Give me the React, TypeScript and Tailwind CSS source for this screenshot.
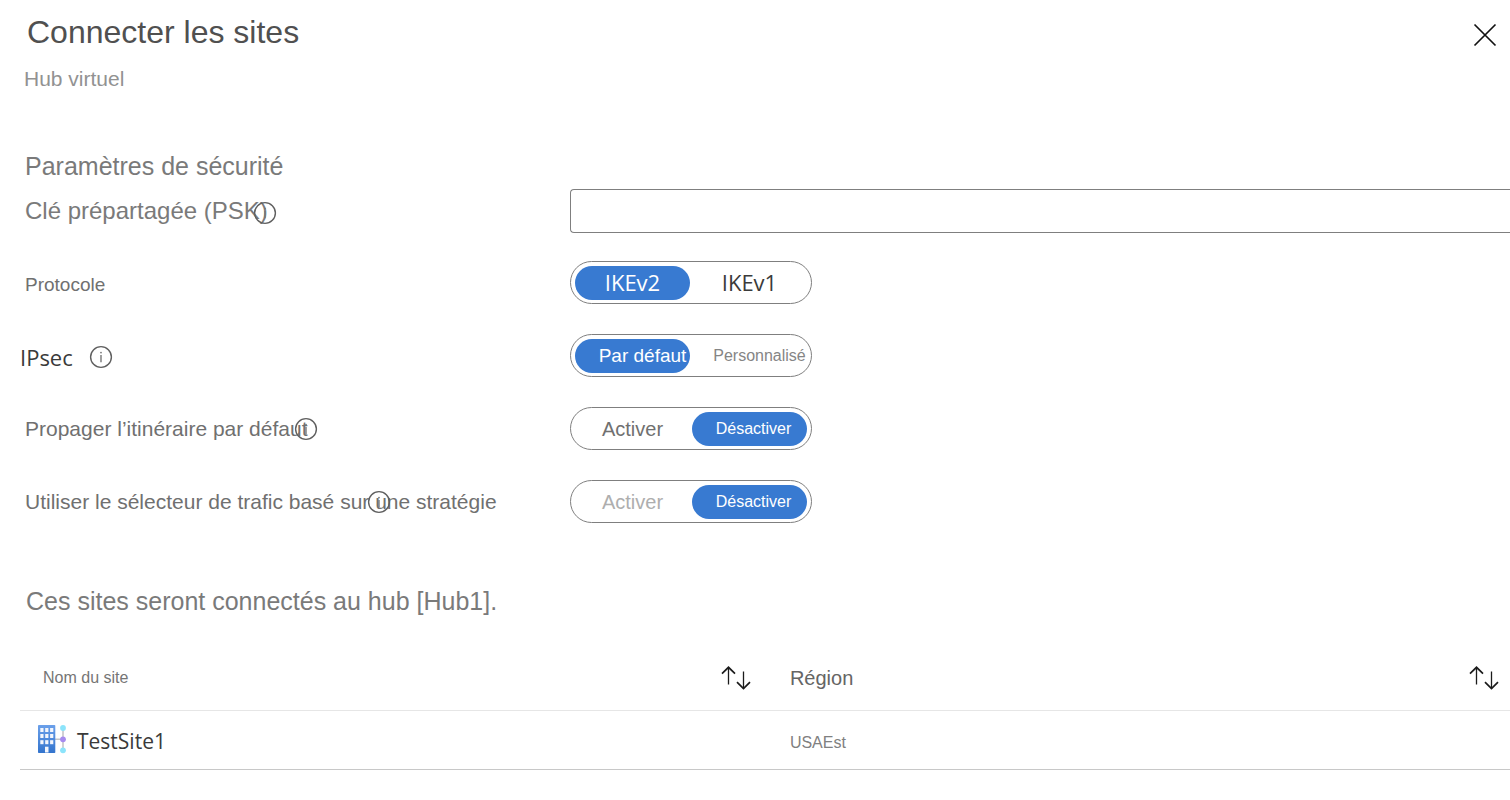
import { useState } from "react";
import type { ReactNode } from "react";

const UI_FONT = "font-['Open_Sans','Noto_Sans',sans-serif]";

function InfoIcon() {
  return (
    <svg className="size-6 shrink-0" viewBox="0 0 24 24" fill="none" aria-hidden="true">
      <circle cx="12" cy="12" r="10.4" stroke="#606060" strokeWidth="1.4" />
      <path d="M12 10v7.2" stroke="#777" strokeWidth="1.4" />
      <circle cx="12" cy="7.6" r="0.9" fill="#777" />
    </svg>
  );
}

function SortIcon() {
  return (
    <svg className="h-6 w-8 shrink-0" viewBox="0 0 32 24" fill="none" stroke="#1b1b1b" aria-hidden="true">
      <path d="M8.500 1.5V18.5M23.500 5.500V22.500" strokeWidth="1.3" />
      <path d="M2 7.700L8.500 1.300L15 7.700M17 16.200L23.500 22.600L30 16.200" strokeWidth="1.7" />
    </svg>
  );
}

function SiteIcon() {
  const rows = [5, 11, 17.2];
  const cols = [2.3, 7.2, 12.1];
  return (
    <svg className="h-8 w-[30px] shrink-0" viewBox="0 0 30 32" fill="none" aria-hidden="true">
      <defs>
        <linearGradient id="building" x1="0" y1="2" x2="0" y2="30" gradientUnits="userSpaceOnUse">
          <stop stopColor="#6ba0ea" />
          <stop offset="1" stopColor="#3374cd" />
        </linearGradient>
      </defs>
      <path d="M17 16.300H25M25 5V27.300" stroke="#c6c6ca" strokeWidth="1.600" />
      <rect x="0" y="2" width="17.300" height="28" rx="0.8" fill="url(#building)" />
      {rows.map((y) =>
        cols.map((x) => <rect key={`${x}-${y}`} x={x} y={y} width="3.200" height="4" fill="#f3f6fc" />),
      )}
      <rect x="7" y="23.700" width="3.500" height="5.800" fill="#f3f6fc" />
      <circle cx="25" cy="5" r="2.900" fill="#8ce4fb" />
      <circle cx="25" cy="16.300" r="2.900" fill="#a78bef" />
      <circle cx="25" cy="27.300" r="2.900" fill="#8ce4fb" />
    </svg>
  );
}

type Option = { text: string; className: string; idleColor: string };

function Toggle({ label, options, initial }: { label: string; options: [Option, Option]; initial: number }) {
  const [selected, setSelected] = useState(initial);
  return (
    <div
      role="group"
      aria-label={label}
      className="grid h-[43px] w-[242px] grid-cols-2 gap-[2px] rounded-full border border-[#7f7f7f] p-1"
    >
      {options.map((option, i) => (
        <button
          key={option.text}
          type="button"
          aria-pressed={selected === i}
          onClick={() => setSelected(i)}
          className={`flex h-[34px] items-center justify-center rounded-full whitespace-nowrap ${option.className} ${
            selected === i ? "bg-[#387ad1] text-white" : option.idleColor
          }`}
        >
          {option.text}
        </button>
      ))}
    </div>
  );
}

function Row({ label, children }: { label: ReactNode; children: ReactNode }) {
  return (
    <div className="grid grid-cols-[545px_1fr] items-center">
      <div className="flex items-center text-[#707070]">{label}</div>
      {children}
    </div>
  );
}

export default function App() {
  return (
    <main className="overflow-x-hidden bg-white pb-7 font-['Liberation_Sans',Arial,sans-serif]">
      <header className="flex items-start justify-between pt-3 pr-3 pl-6">
        <div>
          <h1 className="pl-[3px] text-[32px] leading-10 text-[#505050]">Connecter les sites</h1>
          <p className="mt-3 text-[21px] leading-[30px] text-[#929292]">Hub virtuel</p>
        </div>
        <button type="button" aria-label="Fermer" className="mt-[10px] text-[#111]">
          <svg className="size-[26px]" viewBox="0 0 26 26" fill="none" stroke="currentColor" strokeWidth="1.7" aria-hidden="true">
            <path d="M2.500 2.500L23.500 23.500M23.500 2.500L2.500 23.500" />
          </svg>
        </button>
      </header>

      <section className="pt-14 pl-[25px]">
        <h2 className="text-[25px] leading-8 text-[#7a7a7a]">Paramètres de sécurité</h2>
        <div className="mt-[7px]">
          <Row
            label={
              <div className="relative">
                <label htmlFor="psk" className="text-[24px] leading-8 text-[#7a7a7a]">
                  Clé prépartagée (PSK)
                </label>
                <span className="absolute top-[6px] -right-[9px]">
                  <InfoIcon />
                </span>
              </div>
            }
          >
            <input id="psk" type="text" className="h-11 w-full rounded-l border border-r-0 border-[#7f7f7f] px-3 text-xl" />
          </Row>
        </div>
        <div className="mt-7 flex flex-col gap-[30px]">
          <Row label={<span className="pt-1 text-[19px] leading-7">Protocole</span>}>
            <Toggle
              label="Protocole"
              initial={0}
              options={[
                { text: "IKEv2", className: "pb-[2px] font-['Open_Sans','Noto_Sans',sans-serif] text-[22px]", idleColor: "text-[#3a3a3a]" },
                { text: "IKEv1", className: "pb-[2px] font-['Open_Sans','Noto_Sans',sans-serif] text-[22px]", idleColor: "text-[#3a3a3a]" },
              ]}
            />
          </Row>
          <Row
            label={
              <div className="-ml-[5px] flex items-center gap-4 pt-[2px]">
                <span className={`${UI_FONT} text-[22px] leading-8 text-[#3a3a3a]`}>IPsec</span>
                <InfoIcon />
              </div>
            }
          >
            <Toggle
              label="IPsec"
              initial={0}
              options={[
                { text: "Par défaut", className: "pl-5 text-[19px]", idleColor: "text-[#707070]" },
                { text: "Personnalisé", className: "pl-5 text-base", idleColor: "text-[#858585]" },
              ]}
            />
          </Row>
          <Row
            label={
              <div className="relative">
                <span className="text-[21px] leading-8">Propager l’itinéraire par défaut</span>
                <span className="absolute top-1 -right-[10px]">
                  <InfoIcon />
                </span>
              </div>
            }
          >
            <Toggle
              label="Propager l’itinéraire par défaut"
              initial={1}
              options={[
                { text: "Activer", className: "text-[20px]", idleColor: "text-[#707070]" },
                { text: "Désactiver", className: "pl-2 text-base", idleColor: "text-[#707070]" },
              ]}
            />
          </Row>
          <Row
            label={
              <div className="relative">
                <span className="text-[21px] leading-8">Utiliser le sélecteur de trafic basé sur une stratégie</span>
                <span className="absolute top-1 left-[342px]">
                  <InfoIcon />
                </span>
              </div>
            }
          >
            <Toggle
              label="Utiliser le sélecteur de trafic basé sur une stratégie"
              initial={1}
              options={[
                { text: "Activer", className: "text-[20px]", idleColor: "text-[#aeaeae]" },
                { text: "Désactiver", className: "pl-2 text-base", idleColor: "text-[#707070]" },
              ]}
            />
          </Row>
        </div>
      </section>

      <section className="pt-[62px] pl-5">
        <h2 className="pl-[6px] text-[25px] leading-8 text-[#7a7a7a]">Ces sites seront connectés au hub [Hub1].</h2>
        <table className="mt-[30px] w-full table-fixed border-collapse text-left">
          <thead>
            <tr className="h-[63px] border-b border-[#e6e6e6]">
              <th className="w-[51%] pr-7 pl-[23px] font-normal">
                <div className="flex items-center justify-between">
                  <span className="text-base text-[#757575]">Nom du site</span>
                  <button type="button" aria-label="Trier par nom du site">
                    <SortIcon />
                  </button>
                </div>
              </th>
              <th className="pr-[10px] pl-[10px] font-normal">
                <div className="flex items-center justify-between">
                  <span className="text-[20px] text-[#656565]">Région</span>
                  <button type="button" aria-label="Trier par région">
                    <SortIcon />
                  </button>
                </div>
              </th>
            </tr>
          </thead>
          <tbody>
            <tr className="h-[59px] border-b border-[#c8c8c8]">
              <td className="pl-[18px]">
                <div className="flex items-start gap-[9px]">
                  <SiteIcon />
                  <span className={`${UI_FONT} pt-[2px] text-[21px] leading-8 text-[#3a3a3a]`}>TestSite1</span>
                </div>
              </td>
              <td className="pt-[6px] pl-[10px] text-base text-[#808080]">USAEst</td>
            </tr>
          </tbody>
        </table>
      </section>
    </main>
  );
}
